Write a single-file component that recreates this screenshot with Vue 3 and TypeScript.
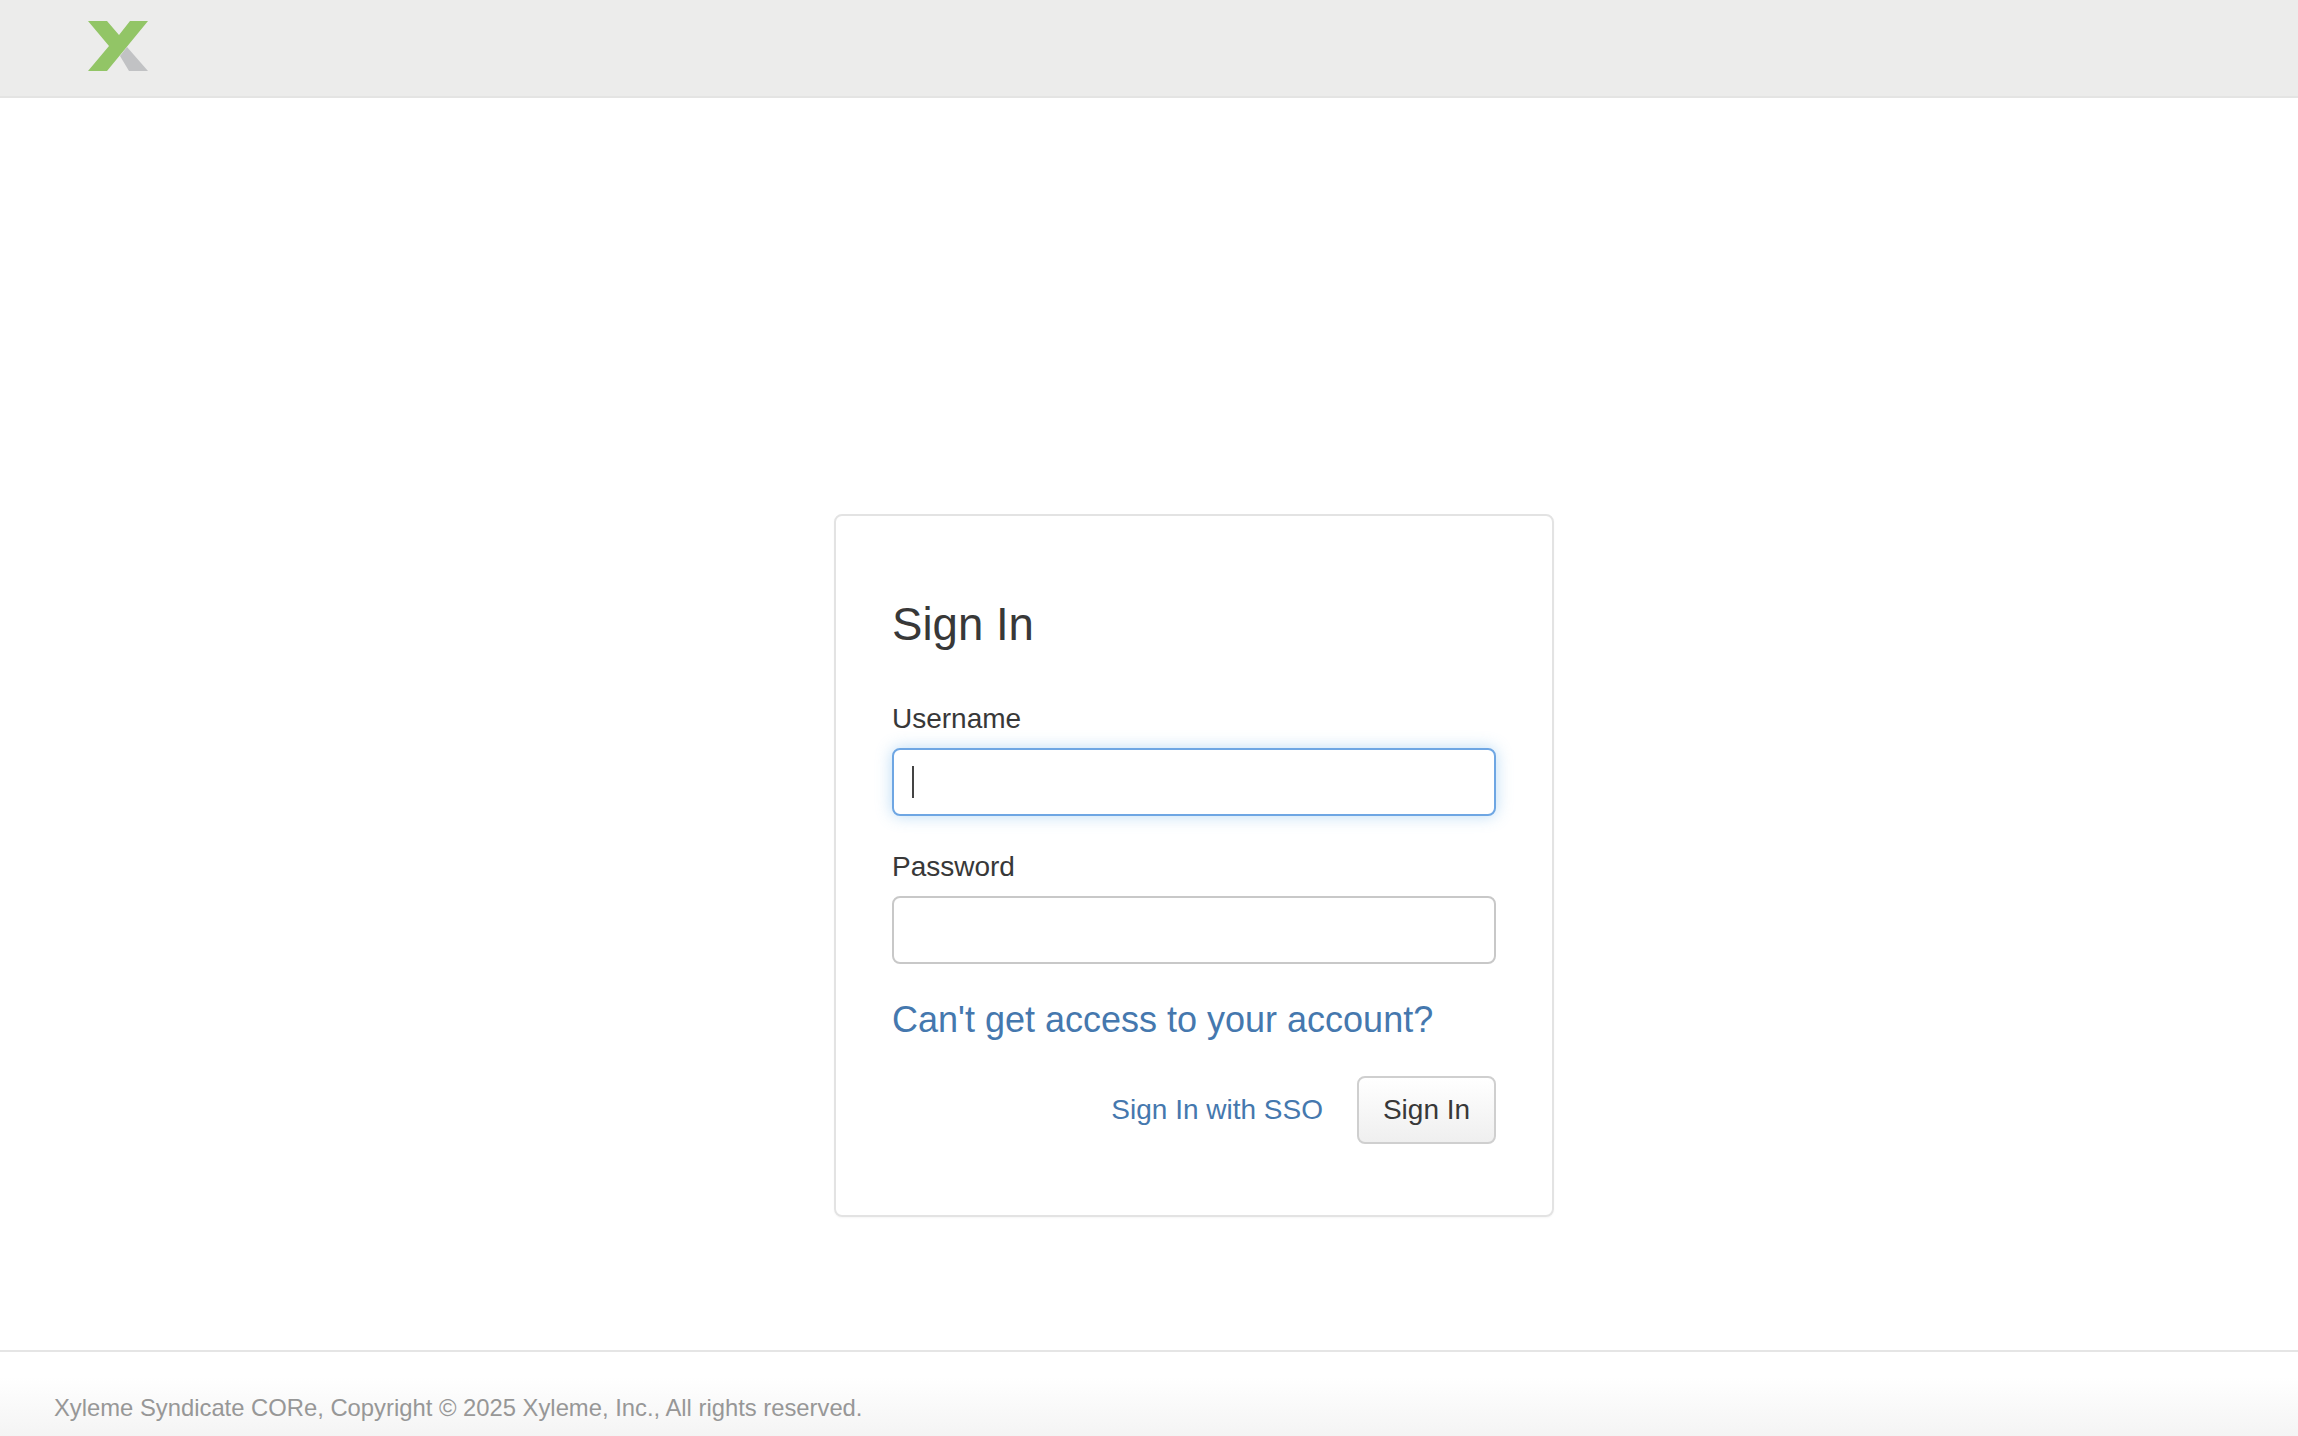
<script setup lang="ts">
const copyright = 'Xyleme Syndicate CORe, Copyright © 2025 Xyleme, Inc., All rights reserved.'
</script>

<template>
  <div class="page">
    <header class="topbar">
      <svg class="logo" viewBox="0 0 60 50" width="60" height="50" aria-label="Xyleme">
        <polygon points="39,26 60,50 41,50 32,35" fill="#c1c2c4" />
        <polygon points="0,0 19,0 31,14 42,0 60,0 19,50 0,50 21,25" fill="#92c566" />
      </svg>
    </header>

    <main class="content">
      <form class="card" @submit.prevent>
        <h1 class="title">Sign In</h1>
        <label class="label" for="username">Username</label>
        <div class="field">
          <input id="username" class="input focused" type="text" />
          <span class="caret"></span>
        </div>
        <label class="label" for="password">Password</label>
        <div class="field">
          <input id="password" class="input" type="password" />
        </div>
        <a class="help" href="#">Can't get access to your account?</a>
        <div class="actions">
          <a class="sso" href="#">Sign In with SSO</a>
          <button class="btn" type="submit">Sign In</button>
        </div>
      </form>
    </main>

    <footer class="footer">{{ copyright }}</footer>
  </div>
</template>

<style>
html, body { margin: 0; background: #fff; }
</style>

<style scoped>
.page {
  width: 2298px;
  height: 1436px;
  display: flex;
  flex-direction: column;
  overflow: hidden;
  font-family: "Liberation Sans", Arial, sans-serif;
  color: #333;
}
.topbar {
  height: 96px;
  flex: none;
  background: #ececeb;
  border-bottom: 2px solid #e4e4e3;
  padding-left: 88px;
  display: flex;
  align-items: flex-start;
}
.logo { margin-top: 21px; display: block; }
.content {
  flex: 1;
  display: flex;
  align-items: flex-start;
  padding: 416px 0 0 834px;
  box-sizing: border-box;
  min-height: 0;
}
.card {
  width: 720px;
  height: 703px;
  box-sizing: border-box;
  border: 2px solid #e3e3e3;
  border-radius: 8px;
  padding: 0 56px;
  display: flex;
  flex-direction: column;
  align-items: stretch;
  box-shadow: 0 1px 2px rgba(0, 0, 0, 0.04);
}
.title {
  margin: 78px 0 0;
  font-size: 45.6px;
  line-height: 62px;
  font-weight: 400;
  color: #383838;
}
.label {
  margin-top: 43px;
  font-size: 28px;
  line-height: 40px;
  color: #383838;
}
.label + .field { margin-top: 9px; }
.field + .label { margin-top: 31px; }
.field { position: relative; height: 68px; }
.input {
  display: block;
  width: 100%;
  height: 68px;
  box-sizing: border-box;
  border: 2px solid #c8c8c8;
  border-radius: 8px;
  background: #fff;
  outline: none;
  padding: 0 18px;
  font-family: inherit;
  font-size: 28px;
}
.input.focused {
  border-color: #6ea6e3;
  box-shadow: 0 0 16px rgba(102, 175, 233, 0.45);
}
.caret {
  position: absolute;
  left: 20px;
  top: 18px;
  width: 2px;
  height: 32px;
  background: #444;
}
.help {
  margin-top: 31px;
  font-size: 36px;
  line-height: 50px;
  color: #4578ae;
  text-decoration: none;
}
.actions {
  margin-top: 31px;
  display: flex;
  justify-content: flex-end;
  align-items: center;
  gap: 34px;
}
.sso {
  font-size: 28px;
  line-height: 40px;
  color: #4578ae;
  text-decoration: none;
}
.btn {
  width: 139px;
  height: 68px;
  box-sizing: border-box;
  border: 2px solid #cfcfcf;
  border-radius: 8px;
  background: linear-gradient(#fff, #efefef);
  font-family: inherit;
  font-size: 28px;
  color: #383838;
  padding: 0;
}
.footer {
  height: 86px;
  flex: none;
  box-sizing: border-box;
  border-top: 2px solid #e5e5e5;
  padding: 40px 0 0 54px;
  background: linear-gradient(#fff 30%, #f4f4f4);
  font-size: 23.8px;
  line-height: 32px;
  color: #979797;
}
</style>
